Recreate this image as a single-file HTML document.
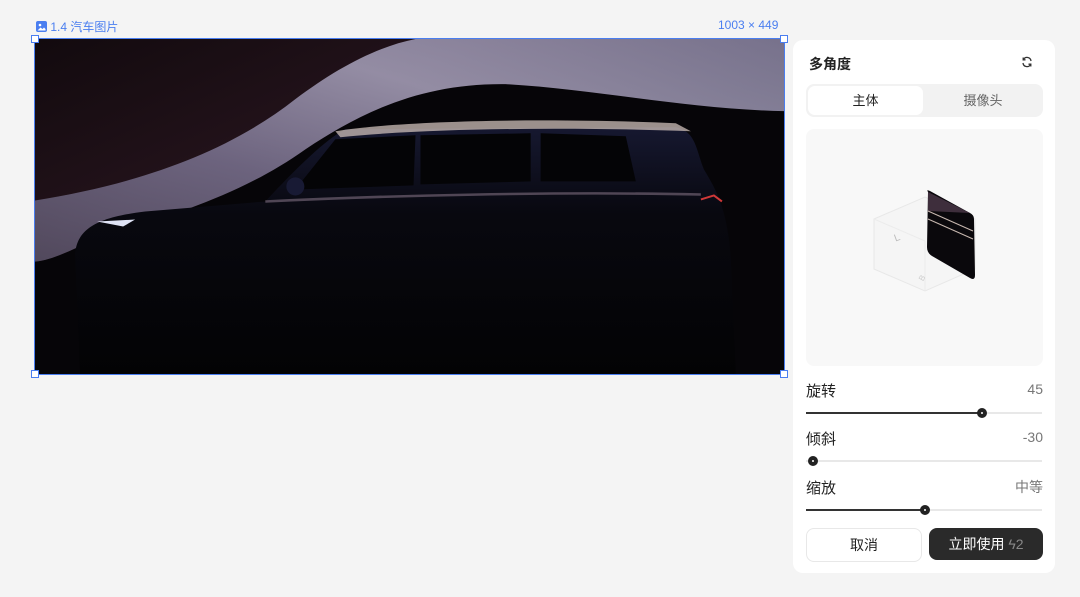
<!DOCTYPE html>
<html><head><meta charset="utf-8"><style>
body{margin:0;width:1080px;height:597px;background:#f4f4f4;font-family:"Liberation Sans","Noto Sans CJK SC",sans-serif;position:relative;overflow:hidden}
.lbl{position:absolute;top:18px;font-size:12px;color:#4a7ef0}
.h{position:absolute;width:8px;height:8px;background:#fff;border:1.5px solid #4a7ef0;box-sizing:border-box}
.panel{position:absolute;left:793px;top:40px;width:262px;height:533px;background:#fff;border-radius:10px}
.t{position:absolute;font-size:14px;color:#222}
.v{position:absolute;right:12px;font-size:14px;color:#777}
.track{position:absolute;left:13px;width:236px;height:2px;background:#e8e8e8}
.fill{position:absolute;left:0;top:0;height:2px;background:#333}
.knob{position:absolute;top:-4px;width:10px;height:10px;border-radius:50%;background:#222;box-sizing:border-box;border:3px solid #222}
.knob:after{content:"";position:absolute;left:1px;top:1px;width:2px;height:2px;background:#fff;border-radius:50%}
</style></head><body>
<div class="lbl" style="left:36px"><svg width="11" height="11" viewBox="0 0 11 11" style="vertical-align:-1px"><rect x="0" y="0" width="11" height="11" rx="2" fill="#4a7ef0"/><circle cx="4" cy="4" r="1.3" fill="#fff"/><path d="M1.5 9.5 L4.5 6.5 L6.5 8 L8 6.5 L9.5 8 V9.5Z" fill="#fff"/></svg> 1.4 汽车图片</div>
<div class="lbl" style="left:718px">1003 × 449</div>
<div style="position:absolute;left:34px;top:38px;width:751px;height:337px;border:1.5px solid #4a7ef0;box-sizing:border-box;overflow:hidden">
<svg width="751" height="337" viewBox="0 0 750 336" preserveAspectRatio="none">
<defs>
<linearGradient id="bg" x1="0" y1="0" x2="1" y2="1"><stop offset="0" stop-color="#120a0e"/><stop offset="0.3" stop-color="#22121a"/><stop offset="0.55" stop-color="#070609"/><stop offset="1" stop-color="#030304"/></linearGradient>
<linearGradient id="sw" x1="0" y1="1" x2="1" y2="0"><stop offset="0" stop-color="#5a5268"/><stop offset="0.35" stop-color="#7a7290"/><stop offset="0.65" stop-color="#a8a2bc"/><stop offset="1" stop-color="#8a84a2"/></linearGradient>
<linearGradient id="car" x1="0" y1="0" x2="0" y2="1"><stop offset="0" stop-color="#161830"/><stop offset="0.35" stop-color="#08080f"/><stop offset="1" stop-color="#030304"/></linearGradient>
</defs>
<rect width="750" height="336" fill="url(#bg)"/>
<path d="M0 222 C20 220 40 208 60 200 C120 180 200 160 270 110 C330 70 390 44 470 45 C560 50 650 70 750 72 L750 336 L0 336Z" fill="#060508"/>
<path d="M0 161 C100 145 190 115 260 60 C300 30 340 8 380 0 L750 0 L750 72 C650 70 560 50 470 45 C390 44 330 70 270 110 C200 160 120 180 60 200 C40 208 20 220 0 222Z" fill="url(#sw)" opacity="0.85"/>
<path d="M40 215 C42 190 60 178 110 172 L230 162 C260 130 290 100 310 90 L640 88 C660 92 660 110 668 130 C680 150 692 170 695 220 L700 336 L45 336 Z" fill="url(#car)"/>
<path d="M260 150 L300 100 L380 96 L378 146Z M385 96 L495 94 L495 142 L385 145Z M505 94 L590 97 L600 142 L505 142Z" fill="#040406"/>
<path d="M300 92 C360 82 500 78 640 84 L655 92 C550 88 400 88 305 98Z" fill="#cdbfb8" opacity="0.75"/>
<path d="M230 162 C350 156 520 152 665 155" stroke="#6d6070" stroke-width="2.5" fill="none" opacity="0.7"/>
<path d="M62 182 L100 180 L88 187Z" fill="#dfe3f5"/>
<path d="M665 160 L678 156 L686 162" stroke="#d03838" stroke-width="2" fill="none"/>
<circle cx="260" cy="147" r="9" fill="#181a34"/>
</svg></div>
<div class="h" style="left:31px;top:35px"></div><div class="h" style="left:780px;top:35px"></div>
<div class="h" style="left:31px;top:370px"></div><div class="h" style="left:780px;top:370px"></div>

<div class="panel">
<div class="t" style="left:16px;top:14px;font-weight:bold">多角度</div>
<svg style="position:absolute;right:22px;top:16px" width="12" height="12" viewBox="0 0 12 12" fill="none" stroke="#333" stroke-width="1.3"><path d="M10 5 A4 4 0 0 0 2.5 3.5 M2 7 A4 4 0 0 0 9.5 8.5"/><path d="M2.2 1.5 V3.8 H4.5 M9.8 10.5 V8.2 H7.5"/></svg>
<div style="position:absolute;left:13px;top:44px;width:237px;height:33px;background:#f2f2f2;border-radius:8px">
<div style="position:absolute;left:2px;top:2px;width:115px;height:29px;background:#fff;border-radius:7px;text-align:center;line-height:29px;font-size:13px;color:#222">主体</div>
<div style="position:absolute;left:119px;top:2px;width:116px;height:29px;text-align:center;line-height:29px;font-size:13px;color:#666">摄像头</div></div>
<div style="position:absolute;left:13px;top:89px;width:237px;height:237px;background:#f8f8f8;border-radius:8px">
<svg style="position:absolute;left:64px;top:60px" width="110" height="110" viewBox="0 0 110 110">
<path d="M4 30 L55 8 L105 30 L105 80 L55 102 L4 80Z" fill="#f5f5f5" stroke="#e8e8e8"/>
<path d="M4 30 L55 52 L55 102" stroke="#ececec" fill="none"/>
<path d="M58 3 Q56 0 60 2 L100 24 Q104 26 104 30 L105 86 Q105 92 100 89 L62 67 Q57 64 57 58Z" fill="#0a080c"/>
<path d="M58 3 L100 24 L58 22Z" fill="#3e2e3c"/>
<path d="M58 22 L103 42 M58 30 L103 50" stroke="#c8b8b0" stroke-width="1"/>
<text x="24" y="52" font-size="10" fill="#bbb" font-family="Liberation Sans" transform="rotate(-20 26 48)">L</text>
<text x="48" y="92" font-size="8" fill="#ccc" font-family="Liberation Sans" transform="rotate(-60 51 88)">B</text></svg></div>
<div class="t" style="left:13px;top:340px;font-size:15px">旋转</div><div class="v" style="top:341px">45</div>
<div class="track" style="top:372px"><div class="fill" style="width:176px"></div><div class="knob" style="left:171px"></div></div>
<div class="t" style="left:13px;top:388px;font-size:15px">倾斜</div><div class="v" style="top:389px">-30</div>
<div class="track" style="top:420px"><div class="knob" style="left:2px"></div></div>
<div class="t" style="left:13px;top:437px;font-size:15px">缩放</div><div class="v" style="top:437px">中等</div>
<div class="track" style="top:469px"><div class="fill" style="width:119px"></div><div class="knob" style="left:114px"></div></div>
<div style="position:absolute;left:13px;top:488px;width:114px;height:32px;border:1px solid #e8e8e8;border-radius:8px;text-align:center;line-height:32px;font-size:14px;color:#222">取消</div>
<div style="position:absolute;left:136px;top:488px;width:114px;height:32px;background:#2a2a2a;border-radius:8px;text-align:center;line-height:32px;font-size:14px;color:#fff">立即使用 <span style="color:#888">ϟ2</span></div>
</div>
</body></html>
